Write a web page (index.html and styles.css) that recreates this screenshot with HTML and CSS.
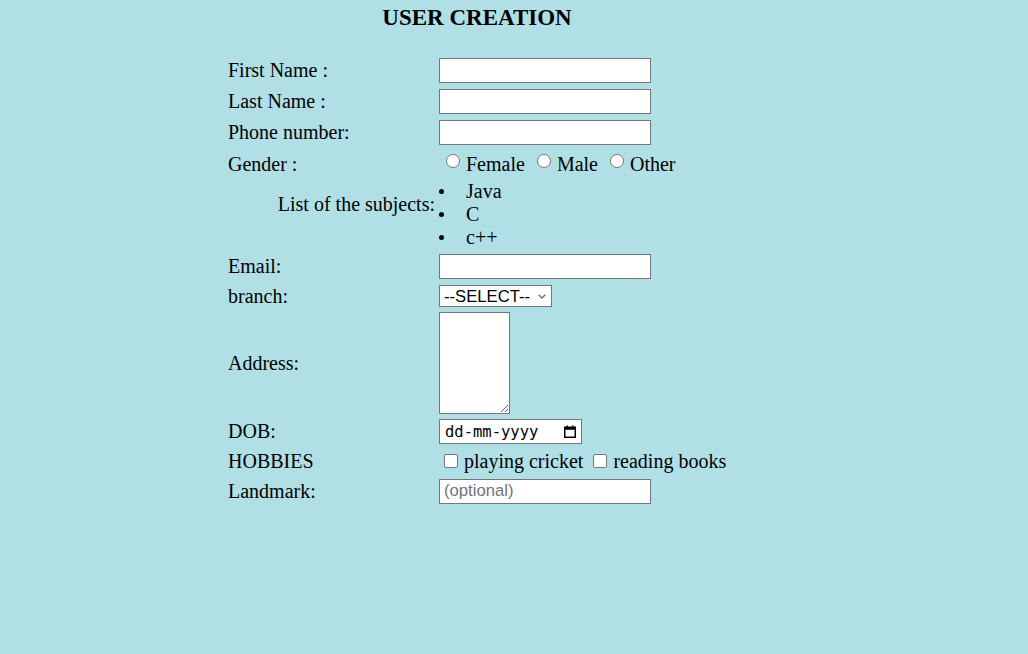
FILE: index.html
```html
<!DOCTYPE html>
<html lang="en">
<head>
<meta charset="utf-8">
<title>User Creation</title>
<link rel="stylesheet" href="styles.css">
</head>
<body>
<div class="wrap">
  <h1 class="title">USER CREATION</h1>
  <form class="form">
    <label class="lbl" for="fn">First Name :</label>
    <div class="fld"><input class="txt" id="fn" type="text"></div>

    <label class="lbl" for="ln">Last Name :</label>
    <div class="fld"><input class="txt" id="ln" type="text"></div>

    <label class="lbl" for="ph">Phone number:</label>
    <div class="fld"><input class="txt" id="ph" type="text"></div>

    <span class="lbl">Gender :</span>
    <div class="fld line">
      <input class="radio" type="radio" name="g" id="gf"><label for="gf">Female</label>
      <input class="radio" type="radio" name="g" id="gm"><label for="gm">Male</label>
      <input class="radio" type="radio" name="g" id="go"><label for="go">Other</label>
    </div>

    <span class="lbl subj">List of the subjects:</span>
    <ul class="subjects">
      <li>Java</li>
      <li>C</li>
      <li>c++</li>
    </ul>

    <label class="lbl" for="em">Email:</label>
    <div class="fld"><input class="txt" id="em" type="email"></div>

    <label class="lbl" for="br">branch:</label>
    <div class="fld">
      <div class="selbox">
        <select class="sel" id="br">
          <option>--SELECT--</option>
          <option>CSE</option>
          <option>ECE</option>
          <option>MECH</option>
        </select>
        <svg class="chev" width="8" height="5" viewBox="0 0 8 5" aria-hidden="true">
          <path d="M0.7 0.7 L4 4 L7.3 0.7" fill="none" stroke="#6d6d6d" stroke-width="1.3"/>
        </svg>
      </div>
    </div>

    <label class="lbl" for="ad">Address:</label>
    <div class="fld"><textarea class="area" id="ad"></textarea></div>

    <label class="lbl" for="dob">DOB:</label>
    <div class="fld">
      <div class="datebox">
        <input class="date" id="dob" type="text" placeholder="dd-mm-yyyy">
        <svg class="cal" width="12" height="13" viewBox="0 0 12 13" aria-hidden="true">
          <rect x="0.75" y="2.25" width="10.5" height="10" fill="none" stroke="#000" stroke-width="1.5"/>
          <rect x="0.75" y="2.25" width="10.5" height="2.5" fill="#000"/>
          <rect x="2.5" y="0.5" width="1.5" height="2.5" fill="#000"/>
          <rect x="8" y="0.5" width="1.5" height="2.5" fill="#000"/>
        </svg>
      </div>
    </div>

    <span class="lbl">HOBBIES</span>
    <div class="fld line">
      <input class="check" type="checkbox" id="h1"><label for="h1">playing cricket</label>
      <input class="check" type="checkbox" id="h2"><label for="h2">reading books</label>
    </div>

    <label class="lbl" for="lm">Landmark:</label>
    <div class="fld"><input class="txt" id="lm" type="text" placeholder="(optional)"></div>
  </form>
</div>
</body>
</html>
```
FILE: styles.css
```css
html, body {
  margin: 0;
  padding: 0;
  background: #b0e0e6;
}

body {
  font-family: "Liberation Serif", "Times New Roman", serif;
  font-size: 20px;
  color: #000;
}

.wrap {
  margin-left: 228px;
  width: 498px;
  padding-top: 5px;
}

.title {
  margin: 0 0 24px;
  font-size: 23px;
  line-height: 26px;
  font-weight: bold;
  text-align: center;
}

.form {
  display: grid;
  grid-template-columns: 211px 1fr;
  grid-template-rows: 31px 31px 31px 32px 71px 31px 28px 106px 31px 28px 32px;
}

.lbl {
  align-self: center;
  line-height: 23px;
  white-space: nowrap;
}

.lbl.subj {
  align-self: start;
  justify-self: end;
  margin-top: 13px;
  padding-right: 4px;
}

.fld {
  align-self: center;
  display: flex;
  align-items: center;
}

.fld.line {
  display: block;
  line-height: 23px;
  white-space: nowrap;
}

.txt {
  box-sizing: border-box;
  width: 212px;
  height: 25px;
  margin: 0;
  padding: 1px 4px;
  border: 1px solid #767676;
  background: #fff;
  font-family: "Liberation Sans", Arial, sans-serif;
  font-size: 16.67px;
  color: #000;
}

.txt::placeholder {
  color: #757575;
}

.radio {
  appearance: none;
  -webkit-appearance: none;
  box-sizing: border-box;
  width: 14px;
  height: 14px;
  margin: 0 6px 0 7px;
  border: 1px solid #767676;
  border-radius: 50%;
  background: #fff;
  vertical-align: 3px;
}

.radio:checked {
  background: radial-gradient(circle, #0075ff 0 3px, #fff 3.5px);
  border-color: #0075ff;
}

.check {
  appearance: none;
  -webkit-appearance: none;
  box-sizing: border-box;
  width: 14px;
  height: 14px;
  margin: 0 6px 0 5px;
  border: 1px solid #767676;
  border-radius: 2px;
  background: #fff;
  vertical-align: 0;
}

.check:checked {
  background: #0075ff;
  border-color: #0075ff;
}

.subjects {
  align-self: start;
  margin: 0;
  padding: 0;
  list-style: none;
  line-height: 23px;
}

.subjects li::before {
  content: "";
  display: inline-block;
  width: 5px;
  height: 5px;
  border-radius: 50%;
  background: #000;
  margin-right: 22px;
  vertical-align: 4px;
}

.selbox {
  box-sizing: border-box;
  width: 113px;
  height: 22px;
  display: flex;
  align-items: center;
  border: 1px solid #767676;
  background: #fff;
}

.sel {
  appearance: none;
  -webkit-appearance: none;
  flex: 1;
  min-width: 0;
  height: 100%;
  margin: 0;
  padding: 0 0 0 4px;
  border: none;
  background: transparent;
  font-family: "Liberation Sans", Arial, sans-serif;
  font-size: 16.67px;
  color: #000;
  outline: none;
}

.chev {
  flex: none;
  margin-right: 5px;
}

.area {
  box-sizing: border-box;
  width: 71px;
  height: 102px;
  margin: 0;
  border: 1px solid #767676;
  background: #fff;
}

.datebox {
  box-sizing: border-box;
  width: 143px;
  height: 25px;
  display: flex;
  align-items: center;
  border: 1px solid #767676;
  background: #fff;
}

.date {
  flex: 1;
  min-width: 0;
  margin: 0;
  padding: 0 0 0 5px;
  border: none;
  background: transparent;
  font-family: "DejaVu Sans Mono", monospace;
  font-size: 15.5px;
  color: #000;
  outline: none;
}

.date::placeholder {
  color: #000;
  opacity: 1;
}

.cal {
  flex: none;
  margin-right: 5px;
}
```
